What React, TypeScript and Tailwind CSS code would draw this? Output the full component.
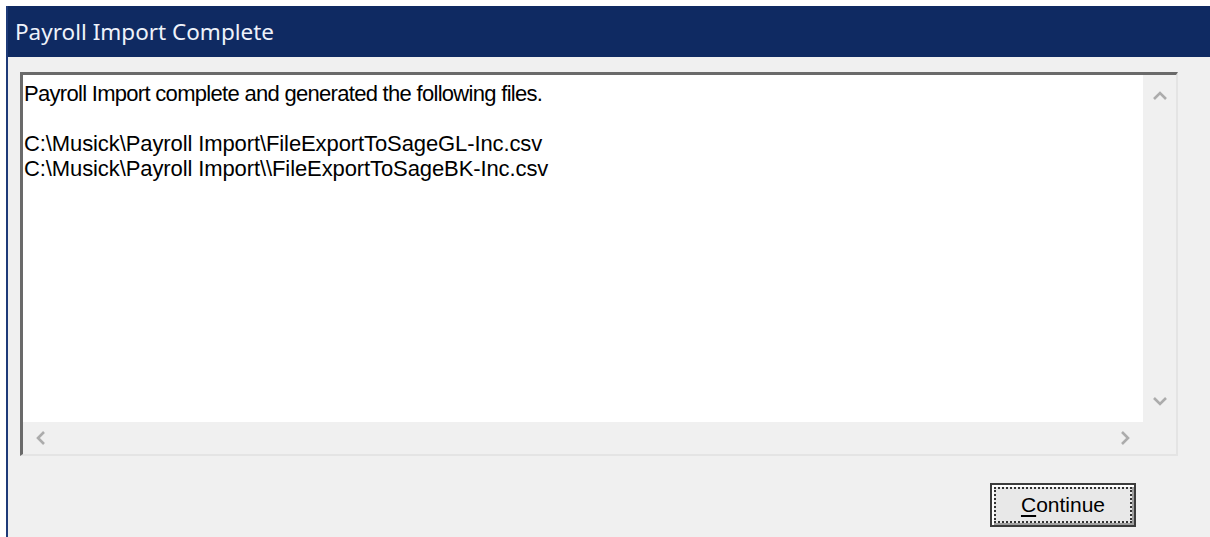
import React from "react";

// each line carries its own tracking so the bitmap-style spacing lines up
const lines = [
  { text: "Payroll Import complete and generated the following files.", track: "tracking-[-0.7px]" },
  { text: "", track: "" },
  { text: "C:\\Musick\\Payroll Import\\FileExportToSageGL-Inc.csv", track: "tracking-[-0.1px]" },
  { text: "C:\\Musick\\Payroll Import\\\\FileExportToSageBK-Inc.csv", track: "tracking-[-0.1px]" },
];

function Chevron({ dir }: { dir: "up" | "down" | "left" | "right" }) {
  const d = {
    up: "M2 10 L8 4 L14 10",
    down: "M2 6 L8 12 L14 6",
    left: "M10 2 L4 8 L10 14",
    right: "M6 2 L12 8 L6 14",
  }[dir];
  return (
    <svg width="16" height="16" viewBox="0 0 16 16" className="text-[#acacac]">
      <path d={d} fill="none" stroke="currentColor" strokeWidth="2.6" />
    </svg>
  );
}

export default function App() {
  return (
    <div className="w-[1210px] h-[537px] bg-white pt-[6px] pl-[6px] overflow-hidden">
      <div className="h-full flex flex-col bg-[#f0f0f0] border-l-2 border-[#1e3a78]">
        {/* title bar */}
        <div
          className="h-[51px] shrink-0 bg-[#0f2a62] flex items-center pl-[7px] text-[#eef2fa] text-[22.5px]"
          style={{ fontFamily: '"Noto Sans", "Open Sans", sans-serif' }}
        >
          Payroll Import Complete
        </div>

        <div className="flex-1 flex flex-col pl-[12px] pr-[32px] pt-[15px]">
          {/* message box */}
          <div className="h-[384px] flex flex-col border-t-[3px] border-l-[3px] border-[#6a6a6a] border-r-2 border-r-[#e4e4e4] border-b-2 border-b-[#e4e4e4]">
            <div className="flex-1 flex min-h-0">
              <div
                className="flex-1 bg-white pl-[1px] pt-[6px] text-[22px] leading-[25px] text-black"
                style={{ fontFamily: '"Liberation Sans", Arial, sans-serif' }}
              >
                {lines.map((l, i) => (
                  <div key={i} className={`h-[25px] whitespace-pre ${l.track}`}>
                    {l.text}
                  </div>
                ))}
              </div>
              <div className="w-[33px] bg-[#f0f0f0] flex flex-col items-center justify-between py-[14px]">
                <Chevron dir="up" />
                <Chevron dir="down" />
              </div>
            </div>
            <div className="h-[32px] flex items-center justify-between bg-[#f0f0f0] pl-[11px] pr-[44px]">
              <Chevron dir="left" />
              <Chevron dir="right" />
            </div>
          </div>

          <div className="flex justify-end pr-[42px] pt-[27px]">
            <button
              className="w-[146px] h-[44px] border-2 border-[#3c3c3c] bg-[#e8e8e8] p-[2px] shadow-[inset_2px_2px_0_#ffffff,inset_-2px_-2px_0_#a0a0a0]"
              style={{ fontFamily: '"Liberation Sans", Arial, sans-serif' }}
            >
              <span className="flex h-full items-center justify-center border-2 border-dotted border-[#333] text-[21px] text-black">
                <span className="underline underline-offset-[3px]">C</span>ontinue
              </span>
            </button>
          </div>
        </div>
      </div>
    </div>
  );
}
